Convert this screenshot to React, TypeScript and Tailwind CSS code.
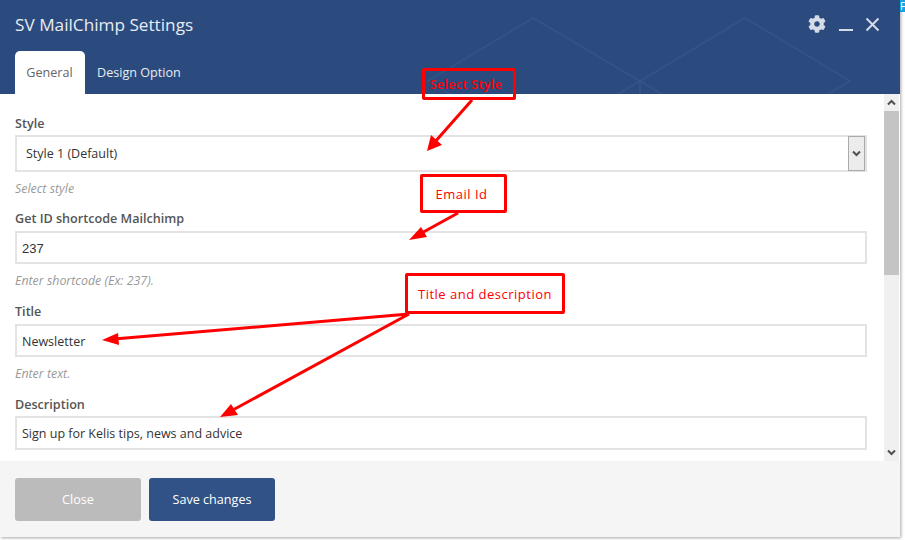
import { FaCog } from "react-icons/fa";

const font = { fontFamily: '"Open Sans", sans-serif' };

function Field({ label, value, hint, valueClass = "text-[12.5px]", gap = "mb-[3px]", height = "h-[33px]" }: { label: string; value: string; hint?: string; valueClass?: string; gap?: string; height?: string }) {
  return (
    <div className={hint ? "mb-[10px]" : ""}>
      <div className={`h-5 pt-px text-[12.6px] leading-5 font-semibold text-[#555] ${gap}`}>{label}</div>
      <div className={`border-2 border-[#e3e3e3] bg-white pl-[5px] leading-[32px] text-[#333] ${height} ${valueClass}`}>{value}</div>
      {hint && <div className="h-5 mt-[7px] text-[12.4px] leading-5 italic text-[#999]">{hint}</div>}
    </div>
  );
}

function Callout({ className, children }: { className: string; children: string }) {
  return (
    <div className={`absolute flex items-center justify-center border-[3px] border-[#ff0000] rounded-[2px] text-[#ff0000] ${className}`}>
      {children}
    </div>
  );
}

function ScrollArrow({ up }: { up?: boolean }) {
  return (
    <div className="h-[17px] flex items-center justify-center">
      <svg width="9" height="7" viewBox="0 0 9 7">
        <path d={up ? "M1 5.5 4.5 2 8 5.5" : "M1 1.5 4.5 5 8 1.5"} fill="none" stroke="#505050" strokeWidth="2" />
      </svg>
    </div>
  );
}

export default function App() {
  return (
    <div className="relative w-[905px] h-[540px] overflow-hidden bg-white" style={font}>
      <div className="absolute right-0 top-0 w-[5px] h-[12px] bg-[#0ea5e9] text-[10px] leading-[12px] text-white overflow-hidden">F</div>
      <div className="w-[900px] h-[537px] flex flex-col shadow-[1px_1px_3px_rgba(0,0,0,0.35)]">
        <header className="relative h-[94px] shrink-0 bg-[#2b4b7e] overflow-hidden">
          <svg className="absolute inset-0" width="900" height="94" viewBox="0 0 900 94">
            <path d="M428 81 533 18 640 81 745 18 850 81 745 144 640 81 533 144Z M640 81V94" fill="none" stroke="#32528a" strokeWidth="2" />
          </svg>
          <div className="relative pl-[15px] pt-[12px] h-[51px] text-[17.2px] leading-[26px] text-[#e8ecf3]">SV MailChimp Settings</div>
          <div className="absolute right-[20px] top-[15px] flex items-center text-[#d5dbe8]">
            <FaCog className="w-[18px] h-[18px] mr-[13px]" />
            <div className="w-[14px] h-[2px] bg-[#d5dbe8] mt-[12px] mr-[12px]" />
            <svg width="15" height="15" viewBox="0 0 15 15">
              <path d="M1.5 1.5 13.5 13.5M13.5 1.5 1.5 13.5" stroke="#d5dbe8" strokeWidth="2" />
            </svg>
          </div>
          <div className="relative flex pl-[15px] text-[12.6px]">
            <div className="w-[70px] h-[43px] pt-px pr-px bg-white rounded-t-[5px] flex items-center justify-center text-[#666]">General</div>
            <div className="h-[43px] pt-px flex items-center pl-[12px] text-[#e8ecf3]">Design Option</div>
          </div>
        </header>

        <main className="relative h-[367px] shrink-0 bg-white flex overflow-hidden">
          <div className="w-[884px] pl-[15px] pr-[17px] pt-[19px]">
            <div className="mb-[10px]">
              <div className="h-5 pt-px mb-[2px] text-[12.6px] leading-5 font-semibold text-[#555]">Style</div>
              <div className="relative h-[37px] border-2 border-[#e3e3e3] bg-white pl-[9px] text-[12.5px] leading-[33px] text-[#333]">
                Style 1 (Default)
                <div className="absolute right-0 top-[-1px] w-[17px] h-[35px] border border-[#aaa] bg-[#ececec] flex items-center justify-center">
                  <svg width="9" height="7" viewBox="0 0 9 7">
                    <path d="M1 1.5 4.5 5 8 1.5" fill="none" stroke="#505050" strokeWidth="2" />
                  </svg>
                </div>
              </div>
              <div className="h-5 mt-[7px] mb-[-1px] text-[12.4px] leading-5 italic text-[#999]">Select style</div>
            </div>
            <Field label="Get ID shortcode Mailchimp" value="237" hint="Enter shortcode (Ex: 237)." valueClass="font-['Liberation_Sans'] text-[13px]" />
            <Field label="Title" value="Newsletter" hint="Enter text." />
            <Field label="Description" value="Sign up for Kelis tips, news and advice" gap="mb-[2px]" height="h-[34px]" />
          </div>
          <div className="w-[15px] h-full bg-[#f0f0f0] flex flex-col">
            <ScrollArrow up />
            <div className="h-[164px] bg-[#c4c4c4]" />
            <div className="flex-1" />
            <ScrollArrow />
          </div>
        </main>

        <footer className="flex-1 bg-[#f5f5f5] flex gap-2 pl-[15px] pt-[17px] text-[12.6px] text-white">
          <div className="w-[126px] h-[43px] pt-px rounded-[3px] bg-[#bbbbbb] flex items-center justify-center">Close</div>
          <div className="w-[126px] h-[43px] pt-px rounded-[3px] bg-[#305286] flex items-center justify-center">Save changes</div>
        </footer>
      </div>

      <svg className="absolute inset-0 pointer-events-none" width="905" height="540" viewBox="0 0 905 540">
        <g stroke="#ff0000" strokeWidth="3" fill="none">
          <path d="M472 100 434 143" />
          <path d="M458 213 418 235" />
          <path d="M409 314 114 339" />
          <path d="M409 314 231 411" />
        </g>
        <g fill="#ff0000">
          <path d="M427 151 431 135 442 145Z" />
          <path d="M409 240 421 227 427 237Z" />
          <path d="M102 340 118 333 119 345Z" />
          <path d="M220 417 231 404 238 415Z" />
        </g>
      </svg>
      <Callout className="left-[422px] top-[68px] w-[94px] h-[32px] pt-[3px] pr-[6px] text-[12.4px] font-semibold tracking-[0.4px] text-[#f01c3c]">Select Style</Callout>
      <Callout className="left-[420px] top-[174px] w-[87px] h-[39px] pt-[2px] pr-[4px] text-[13px] tracking-[0.5px]">Email Id</Callout>
      <Callout className="left-[405px] top-[273px] w-[160px] h-[41px] pt-[2px] text-[13px] tracking-[0.5px]">Title and description</Callout>
    </div>
  );
}
